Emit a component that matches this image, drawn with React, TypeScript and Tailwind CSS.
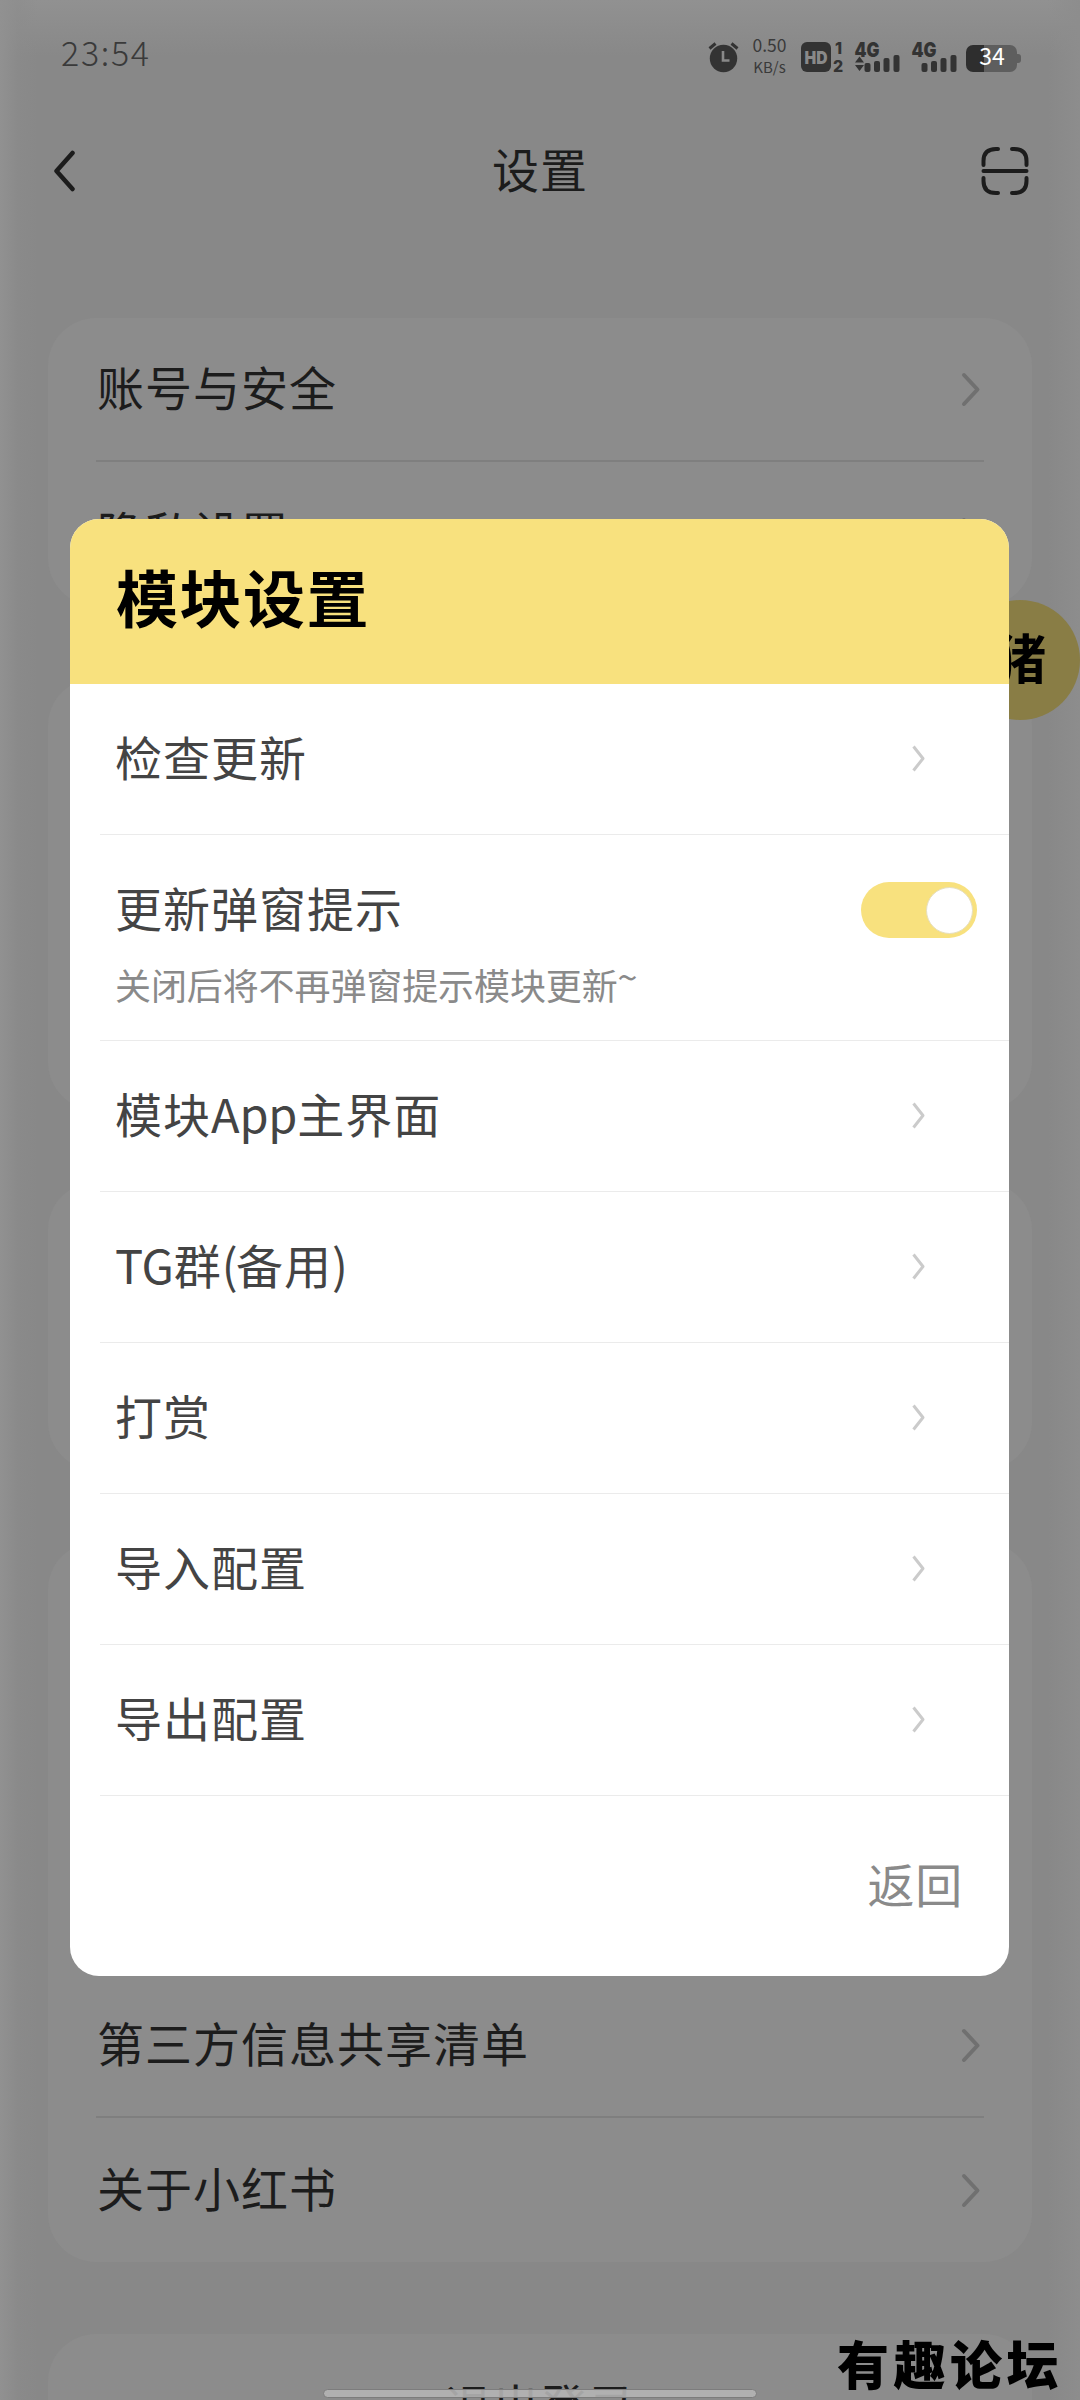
import React from "react";

const FONT = "font-['Noto_Sans_CJK_SC',sans-serif]";

function RowChevron() {
  return (
    <svg width="20" height="36" viewBox="0 0 20 36" fill="none" className="mr-[3px]">
      <path d="M3 4L16.5 18.5L3 33" stroke="#707070" strokeWidth="4" strokeLinecap="round" strokeLinejoin="round" />
    </svg>
  );
}

function Card({ rows, className = "" }: { rows: string[]; className?: string }) {
  return (
    <section className={`mx-12 shrink-0 rounded-[48px] bg-[#8c8c8c] px-12 ${className}`}>
      {rows.map((label, i) => (
        <div
          key={i}
          className={`flex h-36 items-center justify-between ${i < rows.length - 1 ? "border-b-2 border-[#7f7f7f]" : ""}`}
        >
          <span className="-mt-[7px] pl-[1px] text-[47px] leading-none tracking-[1px]">{label}</span>
          <RowChevron />
        </div>
      ))}
    </section>
  );
}

function Signal({ data }: { data?: boolean }) {
  return (
    <svg width="46" height="32" viewBox="0 0 46 32" fill="#333" className="overflow-visible">
      <text x="-0.500" y="15.5" fontSize="20" fontWeight="900" fontFamily="Inter, sans-serif" textLength="25" lengthAdjust="spacingAndGlyphs">
        4G
      </text>
      {data && <path d="M4.5 15.5L9 21.5H0ZM0 24H9L4.5 30Z" />}
      <rect x="9.5" y="22" width="6" height="9" rx="2" />
      <rect x="19" y="20" width="6" height="11" rx="2" />
      <rect x="28.5" y="17" width="6" height="14" rx="2" />
      <rect x="38.5" y="14" width="6" height="17" rx="2" />
    </svg>
  );
}

function StatusBar() {
  return (
    <div className="flex h-[108px] shrink-0 items-start text-[#3a3a3a]">
      <span className="ml-[61px] mt-[34px] text-[34px] font-light leading-[36px] tracking-[1.7px]">23:54</span>
      <div className="ml-auto mr-[59px] mt-[41px] flex items-start">
        <svg width="32" height="32" viewBox="0 0 32 32" fill="none" className="mr-[13px]">
          <circle cx="15.500" cy="17.5" r="13.7" fill="#333" />
          <path d="M1.500 7.5L7.500 2.5M29.500 7.5L23.500 2.5" stroke="#333" strokeWidth="3" />
          <path d="M15 10V19.5H21.5" stroke="#898989" strokeWidth="2.6" />
        </svg>
        <div className="mr-[15px] flex w-[33px] flex-col items-center whitespace-nowrap">
          <span className="-mt-[9px] text-[17.5px] leading-[26px]">0.50</span>
          <span className="-mt-[3px] text-[15px] leading-[24px]">KB/s</span>
        </div>
        <svg width="44" height="32" viewBox="0 0 44 32" fill="#333" className="mr-[10px] overflow-visible">
          <rect x="0" y="1" width="30" height="30" rx="6" />
          <text x="3.5" y="22.5" fontSize="18" fontWeight="900" fill="#898989" fontFamily="Inter, sans-serif" textLength="23" lengthAdjust="spacingAndGlyphs">
            HD
          </text>
          <text x="34" y="12.5" fontSize="16" fontWeight="800" fontFamily="Inter, sans-serif">
            1
          </text>
          <text x="32" y="30.5" fontSize="16" fontWeight="800" fontFamily="Inter, sans-serif">
            2
          </text>
        </svg>
        <div className="mr-[11px] flex">
          <Signal data />
        </div>
        <div className="mr-[8px] flex">
          <Signal />
        </div>
        <div className="mt-[4px] flex items-center">
          <div className="flex h-[27px] w-[51px] items-center justify-center rounded-[7px] bg-[linear-gradient(90deg,#2e2e2e_0_18px,#5e5e5e_18px)] text-[23px] leading-none text-white">
            <span className="-mt-[6px] pl-[1px]">34</span>
          </div>
          <div className="h-[9px] w-[4px] rounded-r-[3px] bg-[#5e5e5e]" />
        </div>
      </div>
    </div>
  );
}

function DialogRow({ label }: { label: React.ReactNode }) {
  return (
    <div className="ml-[30px] flex h-[151px] items-center justify-between border-b border-[#ebebeb] pl-[15px] pr-[83px]">
      <span className="-mt-[8px] text-[47px] leading-none tracking-[1px]">{label}</span>
      <svg width="14" height="28" viewBox="0 0 14 28" fill="none">
        <path d="M1.5 1.500L11 13.500L1.5 25.500" stroke="#cbcbcb" strokeWidth="3" strokeLinejoin="round" />
      </svg>
    </div>
  );
}

function ModuleDialog() {
  return (
    <div className="absolute left-[70px] top-[519px] flex h-[1457px] w-[939px] flex-col overflow-hidden rounded-[29px] bg-white text-[#444]">
      <div className="flex h-[165px] items-center bg-[#f8e17e] pl-[46px]">
        <h2 className="-mt-[12px] text-[62px] font-bold leading-none tracking-[1.5px] text-black">模块设置</h2>
      </div>
      <DialogRow label="检查更新" />
      <div className="ml-[30px] flex h-[206px] flex-col border-b border-[#ebebeb] pl-[15px] pr-[32px] pt-[47px]">
        <div className="flex h-[56px] items-center justify-between">
          <span className="-mt-[8px] text-[47px] leading-none tracking-[1px]">更新弹窗提示</span>
          <div className="flex h-[56px] w-[116px] items-center justify-end rounded-full bg-[#f8e17e] pr-[4px]">
            <div className="size-[47px] rounded-full border border-[#e6dfc0] bg-white" />
          </div>
        </div>
        <span className="mt-[28px] text-[36px] leading-none tracking-[-0.1px] text-[#8a8a8a]">
          关闭后将不再弹窗提示模块更新
          <span className="inline-block -translate-y-[9px]">~</span>
        </span>
      </div>
      <DialogRow
        label={
          <>
            模块<span className="tracking-[-0.2px]">App</span>主界面
          </>
        }
      />
      <DialogRow
        label={
          <>
            <span className="tracking-[-0.3px]">TG</span>群<span className="tracking-[-1.5px]">(</span>备用<span>)</span>
          </>
        }
      />
      <DialogRow label="打赏" />
      <DialogRow label="导入配置" />
      <DialogRow label="导出配置" />
      <div className="flex flex-1 items-center justify-end pr-[46px]">
        <button className="-mt-[8px] text-[47px] leading-none tracking-[0.8px] text-[#8a8a8a]">返回</button>
      </div>
    </div>
  );
}

export default function App() {
  return (
    <main
      className={`relative flex h-[2400px] w-[1080px] flex-col overflow-hidden bg-[#888] bg-[linear-gradient(90deg,#919191_0,#8c8c8c80_18px,#88888800_38px,#88888800_1048px,#8d8d8d_1080px),linear-gradient(180deg,#919191_0,#88888800_56px)] text-[#1c1c1c] ${FONT}`}
    >
      <StatusBar />
      <header className="flex h-[126px] shrink-0 items-center justify-between pl-[53px] pr-[50px]">
        <svg width="50" height="42" viewBox="0 0 50 42" fill="none">
          <path d="M19.5 3L3.5 21L19.5 39" stroke="#1c1c1c" strokeWidth="4.5" strokeLinecap="round" strokeLinejoin="round" />
        </svg>
        <h1 className="-mt-[7px] pr-[3px] text-[47px] leading-none tracking-[1px]">设置</h1>
        <svg width="50" height="50" viewBox="0 0 50 50" fill="none" stroke="#1c1c1c" strokeWidth="4" strokeLinecap="round">
          <path d="M3.5 19V15Q3.5 3 16 3H18M32 3H34Q46.500 3 46.500 15V19M46.500 32V35Q46.500 47 34 47H32M18 47H16Q3.500 47 3.500 35V32M3.500 25H46.500" />
        </svg>
      </header>
      <div className="mt-[84px] flex flex-col gap-[72px]">
        <Card rows={["账号与安全", "隐私设置"]} />
        <Card rows={[]} className="h-[432px]" />
        <Card rows={[]} className="h-[288px]" />
        <Card rows={["第三方信息共享清单", "关于小红书"]} className="pt-[432px]" />
        <section className="mx-12 flex h-36 shrink-0 justify-center rounded-[48px] bg-[#8c8c8c] pt-[46px] text-[47px] leading-none tracking-[0.7px]">
          退出登录
        </section>
      </div>
      <div className="absolute left-[960px] top-[600px] flex size-[120px] items-center justify-center rounded-full bg-[#897d45] text-[53px] font-bold leading-none text-black">
        <span className="-mt-[8px]">猪</span>
      </div>
      <ModuleDialog />
      <div className="absolute left-[323px] top-[2389px] h-[9px] w-[434px] rounded-full border border-[#7c7c7c] bg-[#b4b4b4]/90" />
      <div className="absolute left-[837px] top-[2337px] whitespace-nowrap text-[52px] font-black leading-none tracking-[4.500px] text-black">
        有趣论坛
      </div>
    </main>
  );
}
